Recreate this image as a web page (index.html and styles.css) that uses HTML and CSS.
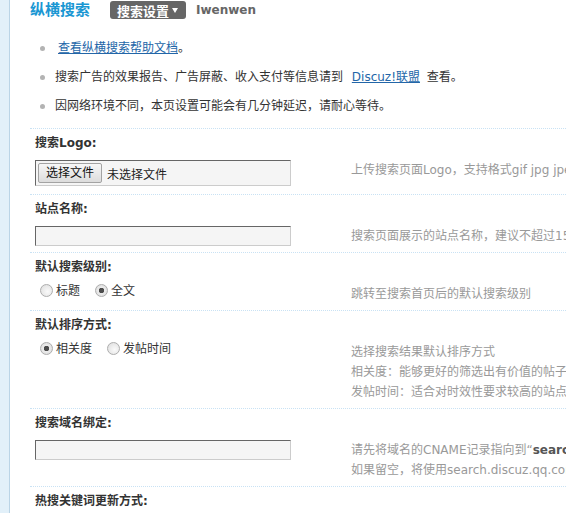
FILE: index.html
```html
<!DOCTYPE html>
<html lang="zh-CN">

<head>
    <meta charset="UTF-8" />
    <meta name="viewport" content="width=device-width, initial-scale=1.0" />
    <title>纵横搜索 - 搜索设置</title>
    <link rel="stylesheet" href="styles.css">
</head>

<body>
    <div class="sidebar"></div>

    <div class="main">
        <div class="itemtitle">
            <h3>纵横搜索</h3>
            <span class="tab-current">搜索设置<span class="caret"></span></span>
            <span class="user">Iwenwen</span>
        </div>

        <ul class="tips">
            <li><a href="#" class="help-link">查看纵横搜索帮助文档</a>。</li>
            <li>搜索广告的效果报告、广告屏蔽、收入支付等信息请到&nbsp;<a href="#" class="union-link">Discuz!联盟</a>&nbsp;查看。</li>
            <li>因网络环境不同，本页设置可能会有几分钟延迟，请耐心等待。</li>
        </ul>

        <div class="setting">
            <div class="setting-label">搜索Logo:</div>
            <div class="setting-row">
                <div class="field">
                    <div class="file-box">
                        <button type="button" class="file-btn">选择文件</button>
                        <span class="file-name">未选择文件</span>
                    </div>
                </div>
                <div class="tip">上传搜索页面Logo，支持格式gif jpg jpeg png，建议尺寸不超过200*60</div>
            </div>
        </div>

        <div class="setting">
            <div class="setting-label">站点名称:</div>
            <div class="setting-row">
                <div class="field"><input type="text" class="txt"></div>
                <div class="tip">搜索页面展示的站点名称，建议不超过15个汉字</div>
            </div>
        </div>

        <div class="setting">
            <div class="setting-label">默认搜索级别:</div>
            <div class="setting-row">
                <div class="field radios">
                    <label class="radio"><input type="radio" name="level">标题</label>
                    <label class="radio"><input type="radio" name="level" checked>全文</label>
                </div>
                <div class="tip">跳转至搜索首页后的默认搜索级别</div>
            </div>
        </div>

        <div class="setting">
            <div class="setting-label">默认排序方式:</div>
            <div class="setting-row">
                <div class="field radios">
                    <label class="radio"><input type="radio" name="order" checked>相关度</label>
                    <label class="radio"><input type="radio" name="order">发帖时间</label>
                </div>
                <div class="tip">
                    选择搜索结果默认排序方式<br>
                    相关度：能够更好的筛选出有价值的帖子，适合大多数站点<br>
                    发帖时间：适合对时效性要求较高的站点
                </div>
            </div>
        </div>

        <div class="setting">
            <div class="setting-label">搜索域名绑定:</div>
            <div class="setting-row">
                <div class="field"><input type="text" class="txt"></div>
                <div class="tip">
                    请先将域名的CNAME记录指向到“<b>search.discuz.qq.com</b>”<br>
                    如果留空，将使用<span class="domain">search.discuz.qq.com</span>作为搜索页面地址
                </div>
            </div>
        </div>

        <div class="setting">
            <div class="setting-label">热搜关键词更新方式:</div>
            <div class="setting-row">
                <div class="field radios">
                    <label class="radio"><input type="radio" name="hot" checked>自动</label>
                    <label class="radio"><input type="radio" name="hot">手动</label>
                </div>
                <div class="tip">选择热搜关键词的更新方式</div>
            </div>
        </div>
    </div>
</body>

</html>
```

FILE: styles.css
```css
html,
body {
    overflow: hidden;
}

body {
    margin: 0;
    display: flex;
    min-height: 100vh;
    font-family: "DejaVu Sans", "Noto Sans CJK SC", sans-serif;
    font-size: 12px;
    color: #333;
    background: #fff;
}

a {
    color: #2366a8;
}

/* 左侧菜单栏 */
.sidebar {
    flex: none;
    width: 9px;
    background: #e2f0f9;
    border-right: 1px solid #bad4e6;
}

.main {
    flex: 1;
    min-width: 0;
    overflow: hidden;
    padding-left: 20px;
}

/* 标题栏 */
.itemtitle {
    display: flex;
    align-items: center;
    height: 20px;
}

.itemtitle h3 {
    margin: 0 20px 0 0;
    font-size: 15px;
    line-height: 20px;
    color: #1b97d3;
}

.tab-current {
    display: flex;
    align-items: center;
    height: 18px;
    padding: 0 8px 0 7px;
    border-radius: 3px;
    background: #666;
    color: #fff;
    font-size: 13px;
    font-weight: bold;
}

.caret {
    width: 0;
    height: 0;
    margin-left: 3px;
    border-left: 3px solid transparent;
    border-right: 3px solid transparent;
    border-top: 5px solid #fff;
}

.user {
    margin-left: 10px;
    font-weight: bold;
    color: #666;
}

/* 提示列表 */
.tips {
    list-style: none;
    margin: 18px 0 0;
    padding: 0 0 12px;
}

.tips li {
    line-height: 20px;
    margin-bottom: 9px;
    white-space: nowrap;
}

.tips li:last-child {
    margin-bottom: 0;
}

.tips li::before {
    content: "";
    display: inline-block;
    width: 5px;
    height: 5px;
    margin: 0 10px 0 10px;
    border-radius: 50%;
    background: #b3b3b3;
    vertical-align: middle;
}

.help-link {
    margin-left: 3px;
}

.union-link {
    margin: 0 3px 0 5px;
}

/* 设置项 */
.setting {
    border-top: 1px dotted #c9e2f4;
}

.setting-label {
    padding: 5px 0 0 5px;
    line-height: 18px;
    font-weight: bold;
    white-space: nowrap;
}

.setting-row {
    display: flex;
    align-items: flex-start;
    padding: 8px 0 6px 5px;
}

.field {
    flex: none;
    width: 316px;
}

.tip {
    flex: none;
    color: #999;
    line-height: 20px;
    white-space: nowrap;
}

.tip b {
    color: #555;
}

.txt {
    box-sizing: border-box;
    display: block;
    width: 256px;
    height: 20px;
    margin: 0;
    padding: 2px;
    border: 1px solid;
    border-color: #666 #ccc #ccc #666;
    background: #f5f5f5;
    font: inherit;
    color: #333;
}

.file-box {
    box-sizing: border-box;
    display: flex;
    align-items: center;
    width: 256px;
    height: 26px;
    margin-bottom: 2px;
    padding: 2px;
    border: 1px solid;
    border-color: #666 #ccc #ccc #666;
    background: #f5f5f5;
}

.file-btn {
    height: 20px;
    padding: 0 7px;
    border: 1px solid #a3a3a3;
    border-radius: 2px;
    background: linear-gradient(#f7f7f7, #dcdcdc);
    font: inherit;
    line-height: 18px;
    color: #111;
}

.file-name {
    margin-left: 5px;
    color: #222;
}

.radios {
    display: flex;
    gap: 10px;
}

.radio {
    display: flex;
    align-items: center;
    height: 13px;
    line-height: 14px;
    white-space: nowrap;
}

.radio input {
    appearance: none;
    width: 13px;
    height: 13px;
    margin: 0 3px 0 5px;
    border: 1px solid #adadad;
    border-radius: 50%;
    background: radial-gradient(circle at 60% 60%, #fafafa, #dcdcdc);
}

.radio input:checked {
    background: radial-gradient(circle, #4d4d4d 0 2.5px, #ececec 3px, #d8d8d8);
}
```
